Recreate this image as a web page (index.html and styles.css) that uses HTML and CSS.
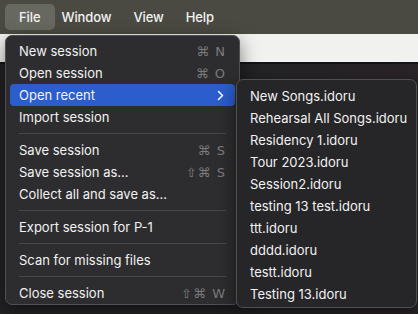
FILE: index.html
```html
<!DOCTYPE html>
<html lang="en">
<head>
  <meta charset="UTF-8" />
  <title>File menu</title>
  <link rel="stylesheet" href="styles.css">
</head>
<body>
  <header class="menubar">
    <span class="top-item open">File</span>
    <span class="top-item">Window</span>
    <span class="top-item">View</span>
    <span class="top-item">Help</span>
  </header>

  <div class="toolbar"></div>
  <main class="workspace"></main>

  <div class="menu main-menu">
    <div class="row">New session<span class="key">⌘ N</span></div>
    <div class="row">Open session<span class="key">⌘ O</span></div>
    <div class="row active">Open recent<span class="chevron">
      <svg width="7" height="11" viewBox="0 0 7 11"><path d="M1.5 1.5 L5.5 5.5 L1.5 9.5" fill="none" stroke="#fff" stroke-width="1.6" stroke-linecap="round" stroke-linejoin="round"/></svg>
    </span></div>
    <div class="row">Import session</div>
    <div class="sep"></div>
    <div class="row">Save session<span class="key">⌘ S</span></div>
    <div class="row">Save session as...<span class="key">⇧⌘ S</span></div>
    <div class="row">Collect all and save as...</div>
    <div class="sep"></div>
    <div class="row">Export session for P-1</div>
    <div class="sep"></div>
    <div class="row">Scan for missing files</div>
    <div class="sep"></div>
    <div class="row">Close session<span class="key">⇧⌘ W</span></div>
  </div>

  <div class="menu sub-menu">
    <div class="row">New Songs.idoru</div>
    <div class="row">Rehearsal All Songs.idoru</div>
    <div class="row">Residency 1.idoru</div>
    <div class="row">Tour 2023.idoru</div>
    <div class="row">Session2.idoru</div>
    <div class="row">testing 13 test.idoru</div>
    <div class="row">ttt.idoru</div>
    <div class="row">dddd.idoru</div>
    <div class="row">testt.idoru</div>
    <div class="row">Testing 13.idoru</div>
  </div>
</body>
</html>
```

FILE: styles.css
```css
body {
  margin: 0;
  width: 418px;
  height: 314px;
  overflow: hidden;
  background-color: #202023;
  font-family: Inter, "DejaVu Sans", sans-serif;
  color: #f2f2f2;
}

.menubar {
  height: 34px;
  background-color: #4a4a42;
  display: flex;
  align-items: center;
  padding-left: 5px;
}

.top-item {
  font-size: 13px;
  font-weight: 500;
  letter-spacing: -0.1px;
  padding: 5px 11px;
  border-radius: 5px;
}

.top-item.open {
  padding: 5px 15px 5px 14px;
  margin-right: -5px;
  background-color: #67685f;
}

.toolbar {
  height: 28px;
  background-color: #f1f1ef;
  border-bottom: 2px solid #141416;
}

.workspace {
  height: 250px;
  background: linear-gradient(90deg, #232326 60%, #2a2327);
}

.menu {
  position: absolute;
  box-sizing: border-box;
  border: 1px solid #505052;
  border-radius: 7px;
  box-shadow: 0 6px 18px rgba(0, 0, 0, 0.5);
  font-size: 13px;
}

.main-menu {
  left: 5px;
  top: 35px;
  width: 235px;
  height: 270px;
  padding: 4px 4px;
  background-color: #2d2d2f;
}

.sub-menu {
  left: 236px;
  top: 79px;
  width: 181px;
  height: 229px;
  padding: 5px 4px;
  background-color: #262528;
}

.row {
  height: 22px;
  display: flex;
  align-items: center;
  justify-content: space-between;
  padding: 0 9px;
  border-radius: 4px;
  white-space: nowrap;
}

.row.active {
  background-color: #2c5dcd;
}

.key {
  color: #7b7b7d;
  font-family: "DejaVu Sans", sans-serif;
  font-size: 13px;
  letter-spacing: 1px;
}

.chevron {
  display: flex;
  margin-right: 2px;
}

.sep {
  height: 1px;
  margin: 5px 9px;
  background-color: #48484a;
}
```
